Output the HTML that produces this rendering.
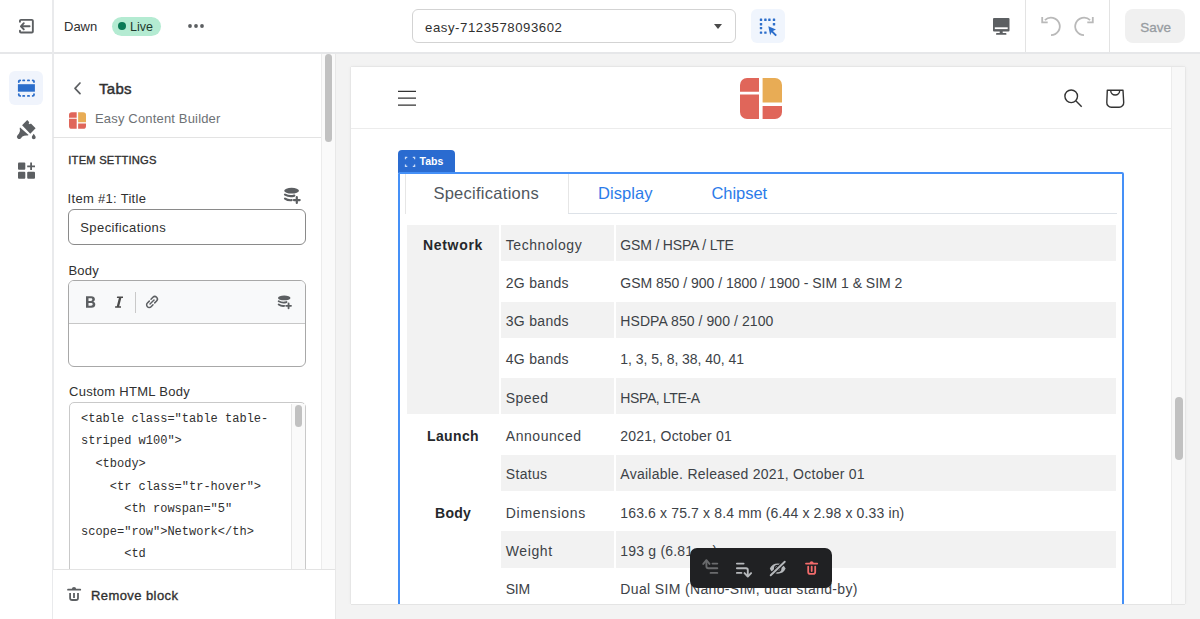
<!DOCTYPE html>
<html><head><meta charset="utf-8">
<style>
*{box-sizing:border-box;margin:0;padding:0}
html,body{width:1200px;height:619px;overflow:hidden;background:#fff;font-family:"Liberation Sans",sans-serif;color:#303030}
.a{position:absolute}
svg{position:absolute;overflow:visible}
.t{position:absolute;white-space:nowrap;line-height:1}
.tb{font-size:14px;font-weight:bold;color:#25282b;letter-spacing:0.3px}
.tc{font-size:14px;color:#3d4247;letter-spacing:0.2px}
</style></head><body>

<!-- ============ TOP BAR ============ -->
<div class="a" style="left:0;top:0;width:1200px;height:54px;background:#fff;border-bottom:2px solid #e6e7e9"></div>
<div class="a" style="left:52px;top:0;width:2px;height:619px;background:#e9eaec"></div>
<div class="a" style="left:1025px;top:0;width:1px;height:52px;background:#e3e3e3"></div>
<div class="a" style="left:1109px;top:0;width:1px;height:52px;background:#e3e3e3"></div>

<!-- exit icon -->
<svg style="left:16px;top:16px" width="20" height="20" viewBox="0 0 20 20" fill="none" stroke="#5c5f62" stroke-width="1.9" stroke-linecap="round" stroke-linejoin="round">
<path d="M3.95 5.7V4.85a1 1 0 0 1 1-1H15.85a1 1 0 0 1 1 1V15.55a1 1 0 0 1-1 1H4.95a1 1 0 0 1-1-1V14.7"/>
<path d="M5 10.3H13.6M7.8 7.2L4.9 10.3L7.8 13.4"/>
</svg>

<div class="t" style="left:64px;top:20px;font-size:13px;color:#303030">Dawn</div>
<div class="a" style="left:112px;top:17px;width:49px;height:19px;border-radius:10px;background:#b4ebd2"></div>
<div class="a" style="left:118px;top:22px;width:8px;height:8px;border-radius:50%;background:#0b7a56"></div>
<div class="t" style="left:130px;top:20.5px;font-size:12.5px;color:#1f3a2e">Live</div>
<svg style="left:185px;top:22px" width="22" height="8" viewBox="0 0 22 8" fill="#5c5f62"><circle cx="5" cy="4" r="1.9"/><circle cx="11" cy="4" r="1.9"/><circle cx="17" cy="4" r="1.9"/></svg>

<!-- select -->
<div class="a" style="left:412px;top:9px;width:324px;height:34px;border:1px solid #d3d3d3;border-radius:6px;background:#fff"></div>
<div class="t" style="left:425px;top:20.5px;font-size:13.2px;letter-spacing:0.55px;color:#303030">easy-7123578093602</div>
<svg style="left:712px;top:22px" width="12" height="10" viewBox="0 0 12 10"><path d="M2 2H10L6 7Z" fill="#4a4a4a"/></svg>

<!-- inspector btn -->
<div class="a" style="left:751px;top:9px;width:34px;height:34px;border-radius:6px;background:#f0f5fd"></div>
<svg style="left:756px;top:15px" width="24" height="24" viewBox="0 0 24 24"><g fill="#2c6ecb"><rect x="3.8" y="3.6" width="2.4" height="2.4" rx="0.5"/><rect x="8.2" y="3.6" width="2.4" height="2.4" rx="0.5"/><rect x="12.2" y="3.6" width="2.4" height="2.4" rx="0.5"/><rect x="16.8" y="3.6" width="2.4" height="2.4" rx="0.5"/><rect x="3.8" y="8.0" width="2.4" height="2.4" rx="0.5"/><rect x="16.8" y="8.0" width="2.4" height="2.4" rx="0.5"/><rect x="3.8" y="11.9" width="2.4" height="2.4" rx="0.5"/><rect x="3.8" y="16.4" width="2.4" height="2.4" rx="0.5"/><rect x="8.2" y="16.4" width="2.4" height="2.4" rx="0.5"/><path d="M12.3 11.3L20 14.5L16.9 15.9L20.9 19.9L19.5 21.3L15.5 17.3L14.2 20.3Z"/></g></svg>

<!-- desktop -->
<svg style="left:990px;top:16px" width="22" height="22" viewBox="0 0 22 22" fill="#5c5f62">
<path d="M4 2h14.5a1 1 0 0 1 1 1v11.5a1 1 0 0 1-1 1H4a1 1 0 0 1-1-1V3a1 1 0 0 1 1-1z"/>
<rect x="4.8" y="11.3" width="12.9" height="1.8" fill="#fff"/>
<rect x="9.7" y="15" width="3" height="2.6"/>
<rect x="6" y="17" width="10.5" height="1.8" rx="0.9"/>
</svg>

<!-- undo / redo -->
<svg style="left:1038px;top:14px" width="26" height="24" viewBox="0 0 26 24" fill="none" stroke="#b9b9b9" stroke-width="1.8" stroke-linecap="butt">
<path d="M6.9 6.05A8.8 8.8 0 1 1 13 21.2"/>
<path d="M4.2 3V8.4H9.7"/>
</svg>
<svg style="left:1071px;top:14px" width="26" height="24" viewBox="0 0 26 24" fill="none" stroke="#b9b9b9" stroke-width="1.8" stroke-linecap="butt">
<path d="M19.1 6.05A8.8 8.8 0 1 0 13 21.2"/>
<path d="M21.8 3V8.4H16.3"/>
</svg>

<!-- save -->
<div class="a" style="left:1125px;top:9px;width:60px;height:34px;border-radius:8px;background:#f0f0f0"></div>
<div class="t" style="left:1140.3px;top:20.7px;font-size:13.5px;-webkit-text-stroke:0.3px #979ca1;color:#979ca1">Save</div>

<!-- ============ LEFT RAIL ============ -->
<div class="a" style="left:9px;top:71px;width:34px;height:34px;border-radius:6px;background:#f0f4fc"></div>
<svg style="left:16px;top:78px" width="20" height="20" viewBox="0 0 20 20">
<rect x="1.9" y="6.2" width="17" height="7.5" fill="#2c6ecb"/>
<g fill="none" stroke="#2c6ecb" stroke-width="1.8" stroke-linecap="round">
<path d="M2.8 4.1V3.6Q2.8 2.4 4 2.4H4.2M16.7 2.4H16.8Q18 2.4 18 3.6V4.1M2.8 16.2V16.7Q2.8 17.9 4 17.9H4.2M16.7 17.9H16.8Q18 17.9 18 16.7V16.2"/>
<path d="M7.1 2.4H8.3M11.9 2.4H13.1M7.1 17.9H8.3M11.9 17.9H13.1"/>
</g></svg>
<!-- brush -->
<svg style="left:12px;top:115px" width="30" height="28" viewBox="0 0 30 28" fill="#5c5f62">
<path d="M15.2 5.1L17.3 7.2L16.6 8.4L17.9 9.3L18.9 8.6L23.6 13.3L18.3 18.7L10.1 10.2Z"/>
<path d="M8.1 12.4L16.6 20.1L15.6 20.6Q12.6 20.2 10.4 21.6L8.9 23.2A2.2 2.2 0 0 1 5.5 20.2L7 18.6Q8.6 16.4 7.7 13Z"/>
<path d="M21.7 18.7C22.6 20 23.7 21.3 23.7 22.3A1.95 1.95 0 0 1 19.8 22.3C19.8 21.3 20.8 20 21.7 18.7Z"/>
</svg>
<!-- apps -->
<svg style="left:16px;top:160px" width="22" height="22" viewBox="0 0 22 22" fill="#5c5f62">
<rect x="2" y="2.4" width="7.3" height="7.4" rx="1"/>
<rect x="2" y="11.8" width="7.3" height="7" rx="1"/>
<rect x="11.2" y="11.8" width="7.8" height="7" rx="1"/>
<path d="M14.2 2.4h1.8v3h3v1.8h-3v2.8h-1.8v-2.8h-3V5.4h3z"/>
</svg>

<!-- ============ SIDEBAR ============ -->
<div class="a" style="left:334px;top:54px;width:2px;height:565px;background:#e8e8e8"></div>
<div class="a" style="left:321px;top:54px;width:14px;height:515px;background:#fafafa;border-left:1px solid #ececec"></div>
<div class="a" style="left:325px;top:54px;width:7px;height:88px;border-radius:3.5px;background:#c1c1c1"></div>

<svg style="left:70px;top:80px" width="14" height="16" viewBox="0 0 14 16" fill="none" stroke="#5c5f62" stroke-width="1.7" stroke-linecap="round" stroke-linejoin="round"><path d="M10 3L5 8.3L10 13.6"/></svg>
<div class="t" style="left:99px;top:81.2px;font-size:15px;letter-spacing:0.3px;-webkit-text-stroke:0.45px #303030;color:#303030">Tabs</div>

<svg style="left:69.3px;top:111.7px" width="17" height="17" viewBox="0 0 42 41">
<path d="M7 0H19V13.7H0V7A7 7 0 0 1 7 0Z" fill="#e0665a"/>
<path d="M0 16H19V41H7A7 7 0 0 1 0 34Z" fill="#e0665a"/>
<path d="M22.6 0H35A7 7 0 0 1 42 7V24.6H22.6Z" fill="#e8ac55"/>
<path d="M22.6 27.9H42V34A7 7 0 0 1 35 41H22.6Z" fill="#e0665a"/>
</svg>
<div class="t" style="left:95px;top:112px;font-size:13px;letter-spacing:0.17px;color:#6d7175">Easy Content Builder</div>

<div class="a" style="left:53px;top:137px;width:268px;height:1px;background:#e3e3e3"></div>

<div class="t" style="left:68.3px;top:155px;font-size:11.2px;letter-spacing:0.2px;-webkit-text-stroke:0.35px #303030;color:#303030">ITEM SETTINGS</div>

<div class="t" style="left:67.6px;top:192.3px;font-size:13px;letter-spacing:0.3px;color:#303030">Item #1: Title</div>
<svg style="left:283px;top:186px" width="18" height="18" viewBox="0 0 18 18"><ellipse cx="8.6" cy="4.7" rx="7.4" ry="2.9" fill="#5c5f62"/><g fill="none" stroke="#5c5f62" stroke-width="2.2" stroke-linecap="round"><path d="M2 8.6Q6.5 11.2 11.3 9.6"/><path d="M2 12.6Q5 14.6 8.6 14.2"/><path d="M13.8 11.2V17M10.9 14.1H16.7"/></g></svg>
<div class="a" style="left:68px;top:209px;width:238px;height:36px;border:1px solid #8a8a8a;border-radius:6px;background:#fff"></div>
<div class="t" style="left:80.3px;top:221.3px;font-size:13px;letter-spacing:0.4px;color:#303030">Specifications</div>

<div class="t" style="left:68.5px;top:263.5px;font-size:13px;letter-spacing:0.2px;color:#303030">Body</div>
<div class="a" style="left:68px;top:280px;width:238px;height:87px;border:1px solid #a8a8a8;border-radius:6px;background:#fff;overflow:hidden">
  <div class="a" style="left:0;top:0;width:236px;height:43px;background:#f8f9fa;border-bottom:1px solid #c7c7c7"></div>
</div>
<svg style="left:276.7px;top:293.6px" width="15.1" height="15.1" viewBox="0 0 18 18"><ellipse cx="8.6" cy="4.7" rx="7.4" ry="2.9" fill="#5c5f62"/><g fill="none" stroke="#5c5f62" stroke-width="2.2" stroke-linecap="round"><path d="M2 8.6Q6.5 11.2 11.3 9.6"/><path d="M2 12.6Q5 14.6 8.6 14.2"/><path d="M13.8 11.2V17M10.9 14.1H16.7"/></g></svg>
<svg style="left:85px;top:295px" width="12" height="14" viewBox="0 0 12 14"><path fill="#5c5f62" fill-rule="evenodd" d="M1 1.3H6.2C8.6 1.3 9.9 2.5 9.9 4.3C9.9 5.5 9.2 6.3 8.2 6.7C9.5 7 10.3 8 10.3 9.4C10.3 11.4 8.9 12.7 6.4 12.7H1ZM3.5 3.3V5.9H5.8C6.8 5.9 7.3 5.45 7.3 4.6C7.3 3.75 6.8 3.3 5.8 3.3ZM3.5 7.9V10.7H6C7.1 10.7 7.7 10.2 7.7 9.3C7.7 8.4 7.1 7.9 6 7.9Z"/></svg>
<svg style="left:112px;top:294px" width="14" height="16" viewBox="0 0 14 16" fill="#4a4a4a"><path d="M5.2 2.5H11V4H9.3L7.2 12.2H9V13.7H3.1V12.2H4.8L6.9 4H4.8Z"/></svg>
<div class="a" style="left:135px;top:292px;width:1px;height:21px;background:#c9c9c9"></div>
<svg style="left:143.8px;top:294.3px" width="16" height="16" viewBox="0 0 16 16" fill="none" stroke="#5c5f62" stroke-width="1.5" stroke-linecap="round"><path d="M7 5.2L8.9 3.3a2.6 2.6 0 0 1 3.7 3.7L10.7 8.9"/><path d="M9 10.8L7.1 12.7a2.6 2.6 0 0 1-3.7-3.7L5.3 7.1"/><path d="M6 10L10 6"/></svg>

<div class="t" style="left:69px;top:384.5px;font-size:13px;letter-spacing:0.28px;color:#303030">Custom HTML Body</div>
<div class="a" style="left:68.5px;top:402px;width:237.5px;height:220px;border:1px solid #c9c9c9;border-radius:5px;background:#fff"></div>
<div class="a" style="left:291px;top:404px;width:14px;height:200px;background:#fafafa;border-left:1px solid #e6e6e6"></div>
<div class="a" style="left:295px;top:405px;width:7px;height:22px;border-radius:3.5px;background:#c1c1c1"></div>
<pre class="a" style="left:81px;top:407.8px;font-family:'Liberation Mono',monospace;font-size:12px;line-height:22.6px;color:#303030">&lt;table class="table table-
striped w100"&gt;
  &lt;tbody&gt;
    &lt;tr class="tr-hover"&gt;
      &lt;th rowspan="5"
scope="row"&gt;Network&lt;/th&gt;
      &lt;td
        class="td"&gt;Technology&lt;/td&gt;</pre>

<!-- footer -->
<div class="a" style="left:53px;top:569px;width:282px;height:50px;background:#fff;border-top:1px solid #e3e3e3"></div>
<svg style="left:64px;top:584px" width="20" height="20" viewBox="0 0 20 20" fill="none" stroke="#5c5f62" stroke-width="1.8">
<path d="M4 5.7H16.3" stroke-linecap="round" stroke-width="1.7"/><path d="M7.9 5A2.1 1.9 0 0 1 12.1 5Z" fill="#5c5f62" stroke="none"/><path d="M6.1 9.1V13.9Q6.1 16 8.2 16H11.9Q14 16 14 13.9V9.1M10 9.1V14.1"/>
</svg>
<div class="t" style="left:91px;top:589px;font-size:13px;letter-spacing:0.42px;-webkit-text-stroke:0.35px #303030;color:#303030">Remove block</div>

<!-- ============ PREVIEW ============ -->
<div class="a" style="left:336px;top:54px;width:864px;height:565px;background:#f3f3f3"></div>
<div class="a" style="left:351px;top:67px;width:834px;height:537px;background:#fff;box-shadow:0 0 1px rgba(0,0,0,.18),0 0 4px rgba(0,0,0,.06)"></div>
<div class="a" style="left:1171px;top:67px;width:14px;height:537px;background:#f8f8f8;border-left:1px solid #ececec"></div>
<div class="a" style="left:1174.5px;top:397px;width:8px;height:63px;border-radius:4px;background:#c1c1c1"></div>

<!-- store header -->
<div class="a" style="left:351px;top:128px;width:820px;height:1px;background:#ececec"></div>
<svg style="left:396px;top:88px" width="22" height="20" viewBox="0 0 22 20" fill="none" stroke="#333" stroke-width="1.3"><path d="M2 3.3H20M2 10.2H20M2 17.2H20"/></svg>
<svg style="left:740px;top:77.5px" width="42" height="41" viewBox="0 0 42 41">
<path d="M7 0H19V13.7H0V7A7 7 0 0 1 7 0Z" fill="#e0665a"/>
<path d="M0 16.4H19V41H7A7 7 0 0 1 0 34Z" fill="#e0665a"/>
<path d="M22.6 0H35A7 7 0 0 1 42 7V24.6H22.6Z" fill="#e8ac55"/>
<path d="M22.6 27.9H42V34A7 7 0 0 1 35 41H22.6Z" fill="#e0665a"/>
</svg>
<svg style="left:1060px;top:84px" width="26" height="26" viewBox="0 0 26 26" fill="none" stroke="#333" stroke-width="1.4"><circle cx="11.2" cy="12.3" r="6.3"/><path d="M15.8 16.8L21.7 22.7"/></svg>
<svg style="left:1103px;top:87px" width="24" height="24" viewBox="0 0 24 24" fill="none" stroke="#333" stroke-width="1.4" stroke-linejoin="round"><path d="M4.3 3.3H20L20.7 15.5A4.5 4.5 0 0 1 16.2 20.2H8.3A4.5 4.5 0 0 1 3.8 15.5Z"/><path d="M7.7 3.5A4.3 4.3 0 0 0 16.7 3.5"/></svg>

<!-- tabs badge + outline -->
<div class="a" style="left:398px;top:150px;width:56.5px;height:23px;border-radius:4px 4px 0 0;background:#2a6bd0"></div>
<svg style="left:403px;top:155px" width="14" height="14" viewBox="0 0 14 14" fill="none" stroke="#c9dbf6" stroke-width="1.3"><path d="M2.5 4.2V2.3H4.3M9.8 2.3H11.6V4.2M11.6 9.4V11.3H9.8M4.3 11.3H2.5V9.4"/></svg>
<div class="t" style="left:419.5px;top:156px;font-size:10.5px;font-weight:bold;color:#fff">Tabs</div>

<div class="a" style="left:398px;top:172px;width:726px;height:460px;border:2px solid #4590f7;border-radius:2px"></div>

<!-- tab nav -->
<div class="a" style="left:405px;top:174px;width:164px;height:40px;border-left:1px solid #e6e6e6;border-right:1px solid #e6e6e6;background:#fff"></div>
<div class="a" style="left:568px;top:213px;width:549px;height:1px;background:#dde2e8"></div>
<div class="t" style="left:433.4px;top:185px;font-size:16.5px;letter-spacing:0.27px;color:#50575e">Specifications</div>
<div class="t" style="left:598px;top:185px;font-size:16.5px;letter-spacing:0.05px;color:#2b7be9">Display</div>
<div class="t" style="left:711.5px;top:185px;font-size:16.5px;letter-spacing:-0.05px;color:#2b7be9">Chipset</div>

<!-- table -->
<div id="tbl" class="a" style="left:407px;top:225px;width:709px;height:379px;overflow:hidden">
<div class="a" style="left:0;top:0.0px;width:92px;height:189.4px;background:#f2f2f2"></div>
<div class="t tb" style="left:0;width:92px;text-align:center;top:12.5px;letter-spacing:0.67px">Network</div>
<div class="a" style="left:94px;top:0.0px;width:113px;height:36.2px;background:#f2f2f2"></div>
<div class="a" style="left:208.5px;top:0.0px;width:500.5px;height:36.2px;background:#f2f2f2"></div>
<div class="t tc" style="left:98.8px;top:12.5px;letter-spacing:0.56px">Technology</div>
<div class="t tc" style="left:213.3px;top:12.5px;letter-spacing:-0.17px">GSM / HSPA / LTE</div>
<div class="t tc" style="left:98.8px;top:50.8px;letter-spacing:0.29px">2G bands</div>
<div class="t tc" style="left:213.3px;top:50.8px;letter-spacing:-0.01px">GSM 850 / 900 / 1800 / 1900 - SIM 1 &amp; SIM 2</div>
<div class="a" style="left:94px;top:76.6px;width:113px;height:36.2px;background:#f2f2f2"></div>
<div class="a" style="left:208.5px;top:76.6px;width:500.5px;height:36.2px;background:#f2f2f2"></div>
<div class="t tc" style="left:98.8px;top:89.1px;letter-spacing:0.29px">3G bands</div>
<div class="t tc" style="left:213.3px;top:89.1px;letter-spacing:0.07px">HSDPA 850 / 900 / 2100</div>
<div class="t tc" style="left:98.8px;top:127.4px;letter-spacing:0.29px">4G bands</div>
<div class="t tc" style="left:213.3px;top:127.4px;letter-spacing:-0.04px">1, 3, 5, 8, 38, 40, 41</div>
<div class="a" style="left:94px;top:153.2px;width:113px;height:36.2px;background:#f2f2f2"></div>
<div class="a" style="left:208.5px;top:153.2px;width:500.5px;height:36.2px;background:#f2f2f2"></div>
<div class="t tc" style="left:98.8px;top:165.7px;letter-spacing:0.45px">Speed</div>
<div class="t tc" style="left:213.3px;top:165.7px;letter-spacing:-0.38px">HSPA, LTE-A</div>
<div class="a" style="left:0;top:191.5px;width:92px;height:74.5px;background:#fff"></div>
<div class="t tb" style="left:0;width:92px;text-align:center;top:204.0px;letter-spacing:0.34px">Launch</div>
<div class="t tc" style="left:98.8px;top:204.0px;letter-spacing:0.55px">Announced</div>
<div class="t tc" style="left:213.3px;top:204.0px;letter-spacing:0.22px">2021, October 01</div>
<div class="a" style="left:94px;top:229.8px;width:113px;height:36.2px;background:#f2f2f2"></div>
<div class="a" style="left:208.5px;top:229.8px;width:500.5px;height:36.2px;background:#f2f2f2"></div>
<div class="t tc" style="left:98.8px;top:242.3px;letter-spacing:0.32px">Status</div>
<div class="t tc" style="left:213.3px;top:242.3px;letter-spacing:0.25px">Available. Released 2021, October 01</div>
<div class="a" style="left:0;top:268.1px;width:92px;height:112.8px;background:#fff"></div>
<div class="t tb" style="left:0;width:92px;text-align:center;top:280.6px;letter-spacing:0.20px">Body</div>
<div class="t tc" style="left:98.8px;top:280.6px;letter-spacing:0.69px">Dimensions</div>
<div class="t tc" style="left:213.3px;top:280.6px;letter-spacing:0.14px">163.6 x 75.7 x 8.4 mm (6.44 x 2.98 x 0.33 in)</div>
<div class="a" style="left:94px;top:306.4px;width:113px;height:36.2px;background:#f2f2f2"></div>
<div class="a" style="left:208.5px;top:306.4px;width:500.5px;height:36.2px;background:#f2f2f2"></div>
<div class="t tc" style="left:98.8px;top:318.9px;letter-spacing:0.60px">Weight</div>
<div class="t tc" style="left:213.3px;top:318.9px;letter-spacing:0.20px">193 g (6.81 oz)</div>
<div class="t tc" style="left:98.8px;top:357.2px;letter-spacing:-0.30px">SIM</div>
<div class="t tc" style="left:213.3px;top:357.2px;letter-spacing:0.35px">Dual SIM (Nano-SIM, dual stand-by)</div>
</div>

<!-- bottom cover -->
<div class="a" style="left:336px;top:604px;width:864px;height:15px;background:#f3f3f3"></div>
<div class="a" style="left:351px;top:604px;width:834px;height:1px;background:#e4e4e4"></div>
<!-- floating toolbar -->
<div class="a" style="left:690px;top:548px;width:142px;height:40px;border-radius:7px;background:#202123"></div>
<svg style="left:690px;top:548px" width="142" height="40" viewBox="0 0 142 40" fill="none" stroke-width="1.9" stroke-linecap="round" stroke-linejoin="round">
<g stroke="#6a6b6d"><path d="M13.3 15.9L16.4 12.2L19.5 15.9"/><path d="M16.4 12.6V18.3Q16.4 20.25 18.3 20.25H27.3"/><path d="M22.5 15.6H27.3M20.6 24.9H27.3"/></g>
<g stroke="#b5b8bb"><path d="M46.9 15.6H53.6M46.9 24.9H51.4"/><path d="M46.9 20.25H56Q57.8 20.25 57.8 22V28"/><path d="M54.5 25.1L57.8 28.5L61.1 25.1"/></g>
<path d="M79.8 20.6C82.2 13.7 93.2 13.7 95.6 20.6C93.2 27.5 82.2 27.5 79.8 20.6Z" fill="#b5b8bb" stroke="none"/>
<circle cx="87.7" cy="20.4" r="3.1" fill="#b5b8bb" stroke="#202123" stroke-width="1.3"/>
<path d="M80.7 27.3L94.75 13.75" stroke="#202123" stroke-width="4.2"/>
<path d="M80.7 27.3L94.75 13.75" stroke="#b5b8bb" stroke-width="1.9"/>
<g stroke="#f26b6b"><path d="M116 15.6H127.2" stroke-width="1.8"/><path d="M119.7 15.6V14.8Q119.7 13.3 121.6 13.3Q123.5 13.3 123.5 14.8V15.6Z" fill="#f26b6b" stroke="none"/><path d="M118.2 18.6V23.9Q118.2 25.8 120.1 25.8H123.3Q125.2 25.8 125.2 23.9V18.6M121.7 18.6V23" stroke-width="1.8"/></g>
</svg>

</body></html>
